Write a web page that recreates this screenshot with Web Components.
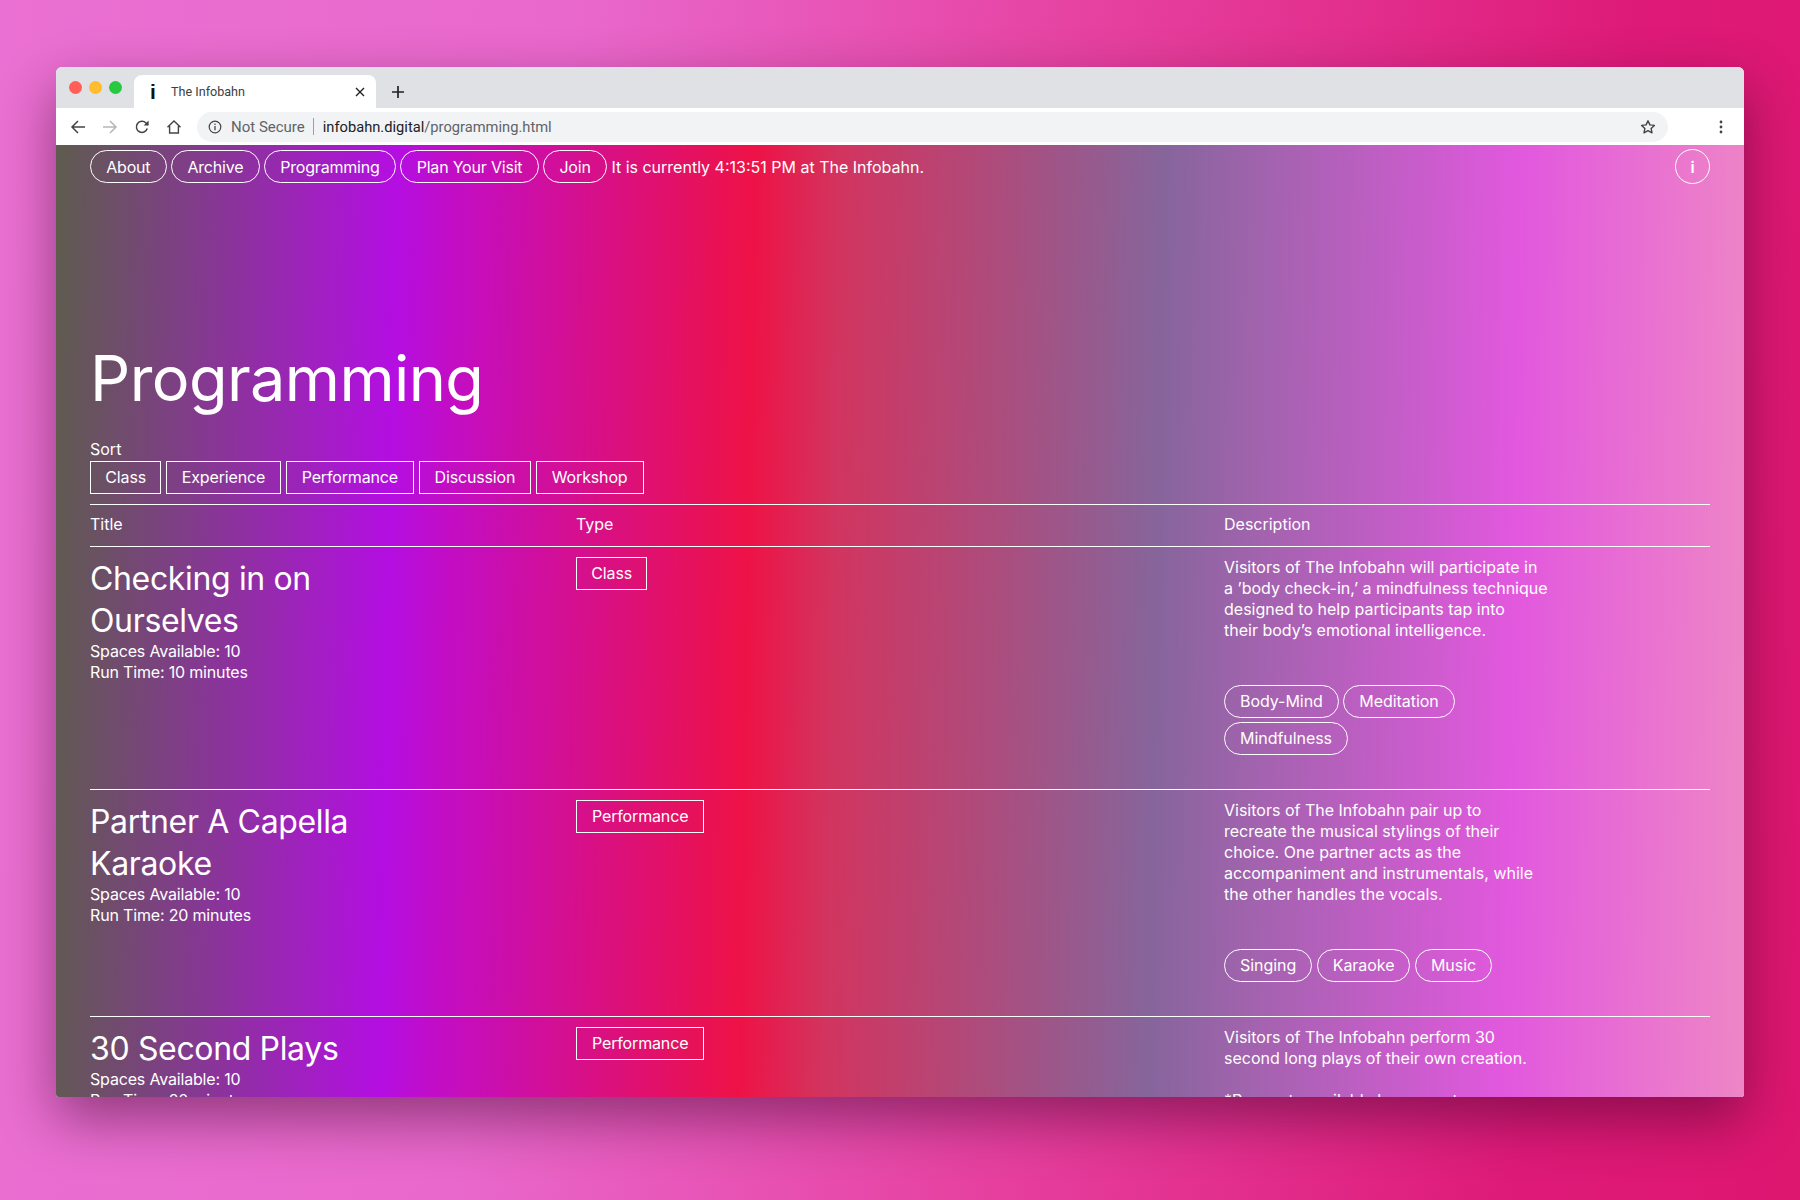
<!DOCTYPE html>
<html>
<head>
<meta charset="utf-8">
<title>The Infobahn</title>
<style>
  html, body { margin: 0; height: 1200px; overflow: hidden; }
  body {
    background: linear-gradient(96deg, #ea70d2 0%, #e968cc 30%, #e6409f 58%, #de1a78 85%, #dd1670 100%);
    font-family: "Inter", "Liberation Sans", sans-serif;
    display: flex;
    flex-direction: column;
    align-items: center;
    padding-top: 67px;
    box-sizing: border-box;
  }
</style>
</head>
<body>
<browser-window>
  <window-tabs slot="chrome"></window-tabs>
  <window-toolbar slot="chrome"></window-toolbar>
  <site-nav>It is currently 4:13:51 PM at The Infobahn.</site-nav>
  <page-title>Programming</page-title>
  <sort-bar></sort-bar>
  <table-head></table-head>
  <program-row name="Checking in on<br>Ourselves" spaces="10" time="10 minutes" type="Class" tags="Body-Mind,Meditation|Mindfulness">
    Visitors of The Infobahn will participate in<br>a ’body check-in,’ a mindfulness technique<br>designed to help participants tap into<br>their body’s emotional intelligence.
  </program-row>
  <program-row name="Partner A Capella<br>Karaoke" spaces="10" time="20 minutes" type="Performance" tags="Singing,Karaoke,Music">
    Visitors of The Infobahn pair up to<br>recreate the musical stylings of their<br>choice. One partner acts as the<br>accompaniment and instrumentals, while<br>the other handles the vocals.
  </program-row>
  <program-row name="30 Second Plays" spaces="10" time="20 minutes" type="Performance" tags="">
    Visitors of The Infobahn perform 30<br>second long plays of their own creation.<br><br>*Requests available by request
  </program-row>
</browser-window>

<script>
class BrowserWindow extends HTMLElement {
  constructor () {
    super();
    this.attachShadow({ mode: "open" });
    this.shadowRoot.innerHTML = `
      <style>
        :host {
          display: flex;
          flex-direction: column;
          width: 1688px;
          height: 1030px;
          border-radius: 6px 6px 3px 3px;
          overflow: hidden;
          box-shadow: 0 22px 55px rgba(50, 0, 35, .48);
          background: #fff;
        }
        .page {
          flex: 1;
          min-height: 0;
          overflow: hidden;
          padding: 4px 34px 0;
          color: #fff;
          background: linear-gradient(91deg, #5e5c4e 0%, #b40ee2 20%, #c10dc8 23%, #ee1246 41%, #d2345f 46%, #86659b 65%, #a263ae 71%, #e258de 86%, #ee86c6 100%);
        }
      </style>
      <slot name="chrome"></slot>
      <div class="page"><slot></slot></div>
    `;
  }
}

class WindowTabs extends HTMLElement {
  constructor () {
    super();
    this.attachShadow({ mode: "open" });
    this.shadowRoot.innerHTML = `
      <style>
        :host { display: flex; align-items: flex-end; height: 41px; background: #dfe1e5; padding-left: 13px; }
        .dots { display: flex; gap: 7px; align-self: center; margin-top: -1px; margin-right: 12px; }
        .dots i { width: 13px; height: 13px; border-radius: 50%; display: block; }
        .tab { width: 242px; height: 33px; background: #fff; border-radius: 8px 8px 0 0; display: flex; align-items: center; font: 12.6px "Roboto", sans-serif; color: #3c4043; box-sizing: border-box; padding: 0 11px 0 16px; }
        .fav { font: 700 21px "Liberation Sans", sans-serif; color: #111; width: 20px; margin-top: 1px; }
        .label { flex: 1; padding-left: 1px; }
        svg { display: block; }
        .plus { margin: 0 0 9px 15px; }
      </style>
      <div class="dots"><i style="background:#ff5f57"></i><i style="background:#febc2e"></i><i style="background:#28c840"></i></div>
      <div class="tab">
        <span class="fav">i</span><span class="label">The Infobahn</span>
        <svg width="10" height="10" viewBox="0 0 10 10"><path d="M1 1l8 8M9 1l-8 8" stroke="#222" stroke-width="1.4"/></svg>
      </div>
      <svg class="plus" width="14" height="14" viewBox="0 0 14 14"><path d="M7 1v12M1 7h12" stroke="#222" stroke-width="1.7"/></svg>
    `;
  }
}

class WindowToolbar extends HTMLElement {
  constructor () {
    super();
    this.attachShadow({ mode: "open" });
    this.shadowRoot.innerHTML = `
      <style>
        :host { display: flex; align-items: center; height: 37px; background: #fff; padding: 0 21px 0 14px; box-sizing: border-box; font: 14.7px "Roboto", sans-serif; }
        svg { display: block; flex: none; }
        .nav { display: flex; gap: 16px; align-items: center; }
        .omni { flex: 1; height: 30px; margin-left: 15px; margin-right: 51px; background: #f1f3f4; border-radius: 15px; display: flex; align-items: center; padding: 0 12px 0 11px; }
        .ns { color: #5f6368; margin-left: 9px; font-size: 15px; }
        .sep { width: 1px; height: 17px; background: #9aa0a6; margin: 0 9px 0 8px; }
        .host { color: #202124; }
        .path { color: #5f6368; flex: 1; }
      </style>
      <div class="nav">
        <svg width="16" height="16" viewBox="0 0 16 16"><path d="M15 8H2M8 2L2 8l6 6" fill="none" stroke="#444" stroke-width="1.5"/></svg>
        <svg width="16" height="16" viewBox="0 0 16 16"><path d="M1 8h13M8 2l6 6-6 6" fill="none" stroke="#b4b6ba" stroke-width="1.5"/></svg>
        <svg width="16" height="16" viewBox="0 0 16 16"><path d="M13.3 9.6A5.6 5.6 0 1 1 12 3.9L14 6" fill="none" stroke="#444" stroke-width="1.5"/><path d="M14.6 1.6v5h-5z" fill="#444"/></svg>
        <svg width="16" height="16" viewBox="0 0 16 16"><path d="M1.5 8.3L8 2l6.5 6.3M3.6 7v7h8.8V7" fill="none" stroke="#444" stroke-width="1.4"/></svg>
      </div>
      <div class="omni">
        <svg width="14" height="14" viewBox="0 0 14 14"><circle cx="7" cy="7" r="5.8" fill="none" stroke="#444" stroke-width="1.2"/><path d="M7 6v4.2" stroke="#444" stroke-width="1.3"/><circle cx="7" cy="4.2" r=".8" fill="#444"/></svg>
        <span class="ns">Not Secure</span><span class="sep"></span><span class="host">infobahn.digital</span><span class="path">/programming.html</span>
        <svg width="16" height="16" viewBox="0 0 16 16"><path d="M8 1.8l1.9 4.1 4.5.5-3.3 3 .9 4.4L8 11.6l-4 2.2.9-4.4-3.3-3 4.5-.5z" fill="none" stroke="#444" stroke-width="1.4" stroke-linejoin="round"/></svg>
      </div>
      <svg width="4" height="14" viewBox="0 0 4 14"><circle cx="2" cy="2" r="1.4" fill="#444"/><circle cx="2" cy="7" r="1.4" fill="#444"/><circle cx="2" cy="12" r="1.4" fill="#444"/></svg>
    `;
  }
}

class PillTag extends HTMLElement {
  constructor () {
    super();
    this.attachShadow({ mode: "open" });
    this.shadowRoot.innerHTML = `
      <style>
        :host { display: inline-flex; align-items: center; height: 33px; box-sizing: border-box; padding: 0 var(--pill-pad, 15px); border: 1px solid #fff; border-radius: 17px; font-size: 16px; white-space: nowrap; letter-spacing: var(--pill-spacing, -.05px); }
        :host([square]) { border-radius: 0; letter-spacing: -.15px; }
      </style>
      <slot></slot>
    `;
  }
}

class SiteNav extends HTMLElement {
  constructor () {
    super();
    this.attachShadow({ mode: "open" });
    this.shadowRoot.innerHTML = `
      <style>
        :host { display: flex; align-items: center; gap: 4.5px; font-size: 16px; --pill-spacing: -.2px; --pill-pad: 15.25px; }
        .info { margin-left: auto; width: 35px; height: 35px; box-sizing: border-box; border: 1px solid #fff; border-radius: 50%; display: flex; align-items: center; justify-content: center; font-weight: 600; }
      </style>
      <pill-tag>About</pill-tag><pill-tag>Archive</pill-tag><pill-tag>Programming</pill-tag><pill-tag>Plan Your Visit</pill-tag><pill-tag>Join</pill-tag>
      <span><slot></slot></span>
      <span class="info">i</span>
    `;
  }
}

class PageTitle extends HTMLElement {
  constructor () {
    super();
    this.attachShadow({ mode: "open" });
    this.shadowRoot.innerHTML = `
      <style>
        :host { display: block; margin-top: 155px; font-size: 63px; line-height: 78px; font-weight: 400; letter-spacing: -.6px; }
      </style>
      <slot></slot>
    `;
  }
}

class SortBar extends HTMLElement {
  constructor () {
    super();
    this.attachShadow({ mode: "open" });
    this.shadowRoot.innerHTML = `
      <style>
        :host { display: block; margin-top: 22px; font-size: 16px; }
        .label { line-height: 21px; }
        .row { display: flex; gap: 4.5px; margin: .5px 0; }
      </style>
      <div class="label">Sort</div>
      <div class="row">
        <pill-tag square style="--pill-pad: 14.3px">Class</pill-tag><pill-tag square>Experience</pill-tag><pill-tag square>Performance</pill-tag><pill-tag square>Discussion</pill-tag><pill-tag square>Workshop</pill-tag>
      </div>
    `;
  }
}

class TableHead extends HTMLElement {
  constructor () {
    super();
    this.attachShadow({ mode: "open" });
    this.shadowRoot.innerHTML = `
      <style>
        :host { display: grid; grid-template-columns: 30% 40% 30%; margin-top: 10px; height: 41px; align-items: center; border-top: 1px solid #fff; border-bottom: 1px solid #fff; font-size: 16px; }
        span { margin-top: -2px; }
      </style>
      <span>Title</span><span>Type</span><span>Description</span>
    `;
  }
}

class ProgramRow extends HTMLElement {
  constructor () {
    super();
    this.attachShadow({ mode: "open" });
  }
  getTags () { // una fila de pills por cada grupo separado con |
    const tags = this.getAttribute("tags");
    if (!tags) return "";
    return tags.split("|").map(group =>
      `<div class="tags">${group.split(",").map(t => `<pill-tag>${t}</pill-tag>`).join("")}</div>`
    ).join("");
  }
  connectedCallback () {
    this.shadowRoot.innerHTML = `
      <style>
        :host { display: grid; grid-template-columns: 30% 40% 30%; padding: 10px 0 34px; border-bottom: 1px solid #fff; font-size: 16px; line-height: 21px; }
        h2 { margin: 1px 0 -1px; font-size: 32px; line-height: 42px; font-weight: 400; letter-spacing: -.35px; }
        .meta { letter-spacing: -.17px; }
        .type { display: block; }
        .tag-list { margin-top: 44px; display: flex; flex-direction: column; gap: 4px; }
        .tags { display: flex; gap: 4.5px; }
        pill-tag { --pill-pad: ${this.getAttribute("type") === "Class" ? "14.3px" : "15px"}; }
        .tags pill-tag { --pill-pad: 15px; }
      </style>
      <div>
        <h2>${this.getAttribute("name")}</h2>
        <div class="meta">Spaces Available: ${this.getAttribute("spaces")}</div>
        <div class="meta">Run Time: ${this.getAttribute("time")}</div>
      </div>
      <div class="type"><pill-tag square>${this.getAttribute("type")}</pill-tag></div>
      <div>
        <div class="text"><slot></slot></div>
        <div class="tag-list">${this.getTags()}</div>
      </div>
    `;
  }
}

customElements.define("browser-window", BrowserWindow);
customElements.define("window-tabs", WindowTabs);
customElements.define("window-toolbar", WindowToolbar);
customElements.define("pill-tag", PillTag);
customElements.define("site-nav", SiteNav);
customElements.define("page-title", PageTitle);
customElements.define("sort-bar", SortBar);
customElements.define("table-head", TableHead);
customElements.define("program-row", ProgramRow);
</script>
</body>
</html>
